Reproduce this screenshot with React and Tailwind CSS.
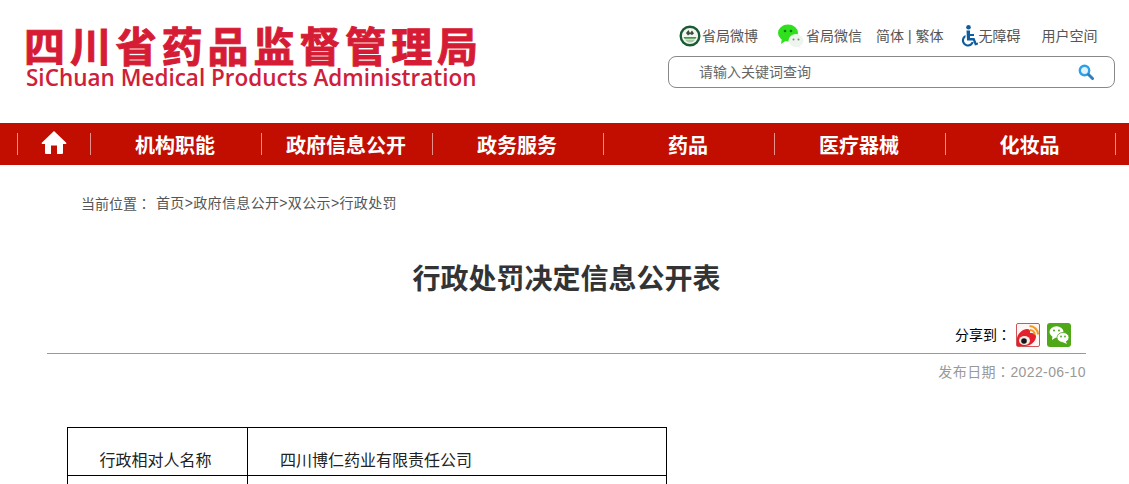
function Home() {
  return (
    <svg width="26" height="24" viewBox="0 0 26 24" fill="white">
      <path d="M13 1 L25.5 13 L25 14 H22 V23 Q22 24 21 24 H16 V15.5 H10 V24 H5 Q4 24 4 23 V14 H1 L0.5 13 Z" />
    </svg>
  );
}
function WeiboRound() {
  return (
    <svg width="22" height="22" viewBox="0 0 22 22">
      <circle cx="11" cy="11" r="9.3" fill="#f2f5f0" stroke="#1a5b34" strokeWidth="2.4" />
      <path d="M7 8 L9.5 5 L11 8 L13 5.5 L15 8.5 L13 10 L11 9 L9 10.5Z" fill="#3d4a40" />
      <path d="M4.5 12 H17.5 L16.5 13.8 H5.5Z" fill="#3f9a45" />
      <path d="M6 14.5 H16 Q14.5 17.5 11 17.5 Q7.5 17.5 6 14.5Z" fill="#a9c9a6" />
    </svg>
  );
}
function WechatGreen() {
  return (
    <svg width="26" height="24" viewBox="0 0 26 24">
      <ellipse cx="10" cy="9" rx="10" ry="8.5" fill="#2fe01c" />
      <path d="M4 14 L3 20 L9 16Z" fill="#2fe01c" />
      <circle cx="7" cy="7" r="1.3" fill="#0f7a0f" />
      <circle cx="13" cy="7" r="1.3" fill="#0f7a0f" />
      <ellipse cx="18" cy="16.5" rx="7.5" ry="6.5" fill="#eef5ee" />
      <path d="M21 21 L23 24 L17 22Z" fill="#eef5ee" />
      <circle cx="15.5" cy="15.5" r="1" fill="#7a8a7a" />
      <circle cx="20.5" cy="15.5" r="1" fill="#7a8a7a" />
    </svg>
  );
}
function Access() {
  return (
    <svg width="17" height="22" viewBox="0 0 17 22" fill="#0f5c9e">
      <circle cx="7.5" cy="2.3" r="2.3" />
      <path d="M5.5 5.5 H9 V9 H13 V11 H9 V13 H13.5 L15.5 18 L16.8 17.5 L17 19.5 L14 20.5 L12 15.5 H6 Z" />
      <path d="M4.5 10 V12.2 A4 4 0 1 0 10.6 17 H12.7 A6 6 0 1 1 4.5 10Z" />
    </svg>
  );
}
function Search() {
  return (
    <svg width="16" height="16" viewBox="0 0 16 16">
      <circle cx="6.5" cy="6.5" r="4.7" fill="#dff3fd" stroke="#2f9fe6" strokeWidth="2.4" />
      <path d="M10.5 10.5 L14.5 14.5" stroke="#2f7fc0" strokeWidth="3" strokeLinecap="round" />
    </svg>
  );
}
function ShareWeibo() {
  return (
    <svg width="24" height="24" viewBox="0 0 24 24">
      <rect x="0.5" y="0.5" width="23" height="23" rx="1.5" fill="#fdf6f4" stroke="#d0555a" />
      <path d="M1 15 C2 10 7 6 11 6 C13.5 6 14.5 7.5 14 10 C17.5 9.5 20 11 20 13.5 C20 18 15 23 9 23 H1 Z" fill="#e3202c" />
      <ellipse cx="8.5" cy="17.5" rx="5.5" ry="4.5" fill="#f7e9e4" />
      <circle cx="8" cy="18" r="2.8" fill="#151515" />
      <path d="M13.5 3 A8.5 8.5 0 0 1 22 11.5" fill="none" stroke="#f39a1d" strokeWidth="2.2" />
      <path d="M14 7 A4.7 4.7 0 0 1 18.7 11.5" fill="none" stroke="#f39a1d" strokeWidth="2.2" />
    </svg>
  );
}
function ShareWechat() {
  return (
    <svg width="24" height="24" viewBox="0 0 24 24">
      <rect width="24" height="24" rx="3" fill="#4ea818" />
      <ellipse cx="9.5" cy="9" rx="7" ry="5.7" fill="#fff" />
      <path d="M5.5 13 L5 17 L9.5 14Z" fill="#fff" />
      <circle cx="7" cy="7.5" r="1" fill="#4ea818" />
      <circle cx="12" cy="7.5" r="1" fill="#4ea818" />
      <ellipse cx="16" cy="14.5" rx="6" ry="5" fill="#fff" stroke="#4ea818" strokeWidth="0.8" />
      <path d="M18.5 18 L20 21 L15.5 19Z" fill="#fff" />
      <circle cx="14" cy="13.5" r="0.9" fill="#4ea818" />
      <circle cx="18" cy="13.5" r="0.9" fill="#4ea818" />
    </svg>
  );
}
const navItems = ["机构职能", "政府信息公开", "政务服务", "药品", "医疗器械", "化妆品"];

export default function App() {
  return (
    <div className="h-[484px] overflow-hidden bg-white font-['Liberation_Sans','Noto_Sans_CJK_SC',sans-serif]">
      <header className="flex h-[123px] justify-between pl-[24px] pr-[14px]">
        <div className="pt-[23px] text-[#d61c35]">
          <div className="whitespace-nowrap font-['Noto_Sans_CJK_SC',sans-serif] text-[41px] font-bold leading-[42px] tracking-[4.9px] [-webkit-text-stroke:1px_#d61c35]">四川省药品监督管理局</div>
          <div className="mt-[1px] whitespace-nowrap pl-[2px] font-['Open_Sans',sans-serif] text-[22.5px] font-semibold leading-[24px] text-[#cf2039]">SiChuan Medical Products Administration</div>
        </div>
        <div className="w-[447px] pt-[25px]">
          <div className="flex h-[22px] items-center whitespace-nowrap pl-[11px] text-[14px] text-[#555]">
            <WeiboRound />
            <span className="ml-px">省局微博</span>
            <span className="ml-5"><WechatGreen /></span>
            <span className="ml-[2px]">省局微信</span>
            <span className="ml-[14px]">简体 <span className="text-[#7a4a14]">|</span> 繁体</span>
            <span className="ml-[18px]"><Access /></span>
            <span>无障碍</span>
            <span className="ml-[21px]">用户空间</span>
          </div>
          <div className="mt-[9px] flex h-8 items-center justify-between rounded-[8px] border border-[#888] pl-[30px] pr-[20px] text-[14px] text-[#666]">
            <span>请输入关键词查询</span>
            <Search />
          </div>
        </div>
      </header>

      <nav className="flex h-[42px] items-center bg-[#c20e00] pl-[17px]">
        <div className="flex h-[22px] w-[73px] items-center justify-center border-l border-[#e8908a] pb-1">
          <Home />
        </div>
        {navItems.map((t, i) => (
          <div key={t} className={`flex h-[22px] w-[171px] items-center justify-center border-l border-[#e8908a] pr-[2px] pt-[3px] text-[20px] font-bold text-white ${i === navItems.length - 1 ? "border-r" : ""}`}>
            {t}
          </div>
        ))}
      </nav>

      <main className="pl-[47px]">
        <div className="flex pl-[34px] pt-[28px] text-[14px] leading-5 text-[#555]">
          <span>当前位置<span className="font-['Noto_Sans_CJK_TC',sans-serif]">：</span></span>
          <span className="ml-[5px] tracking-[0.35px]">首页&gt;政府信息公开&gt;双公示&gt;行政处罚</span>
        </div>
        <div className="w-[1039px]">
          <h1 className="mt-[46px] text-center text-[28px] font-bold leading-[40px] text-[#333]">行政处罚决定信息公开表</h1>
          <div className="mt-[23px] flex h-[24px] items-center justify-end pr-[15px] text-[14px] text-black">
            <span className="mr-[5px]">分享到<span className="font-['Noto_Sans_CJK_TC',sans-serif]">：</span></span>
            <ShareWeibo />
            <span className="ml-[7px]"><ShareWechat /></span>
          </div>
          <div className="mt-[6px] border-t border-[#999]" />
          <div className="mt-[7px] text-right text-[14px] leading-5 tracking-[0.4px] text-[#999]">发布日期<span className="font-['Noto_Sans_CJK_TC',sans-serif]">：</span>2022-06-10</div>
        </div>
        <table className="ml-[20px] mt-[45px] w-[600px] table-fixed border-collapse text-[16px] text-[#222]">
          <tbody>
            <tr className="h-[48px]">
              <td className="w-[180px] border border-black pr-[4px] pt-[18px] text-center leading-6">行政相对人名称</td>
              <td className="border border-black pl-[32px] pt-[18px] leading-6">四川博仁药业有限责任公司</td>
            </tr>
            <tr className="h-[48px]">
              <td className="border border-black" />
              <td className="border border-black" />
            </tr>
          </tbody>
        </table>
      </main>
    </div>
  );
}
